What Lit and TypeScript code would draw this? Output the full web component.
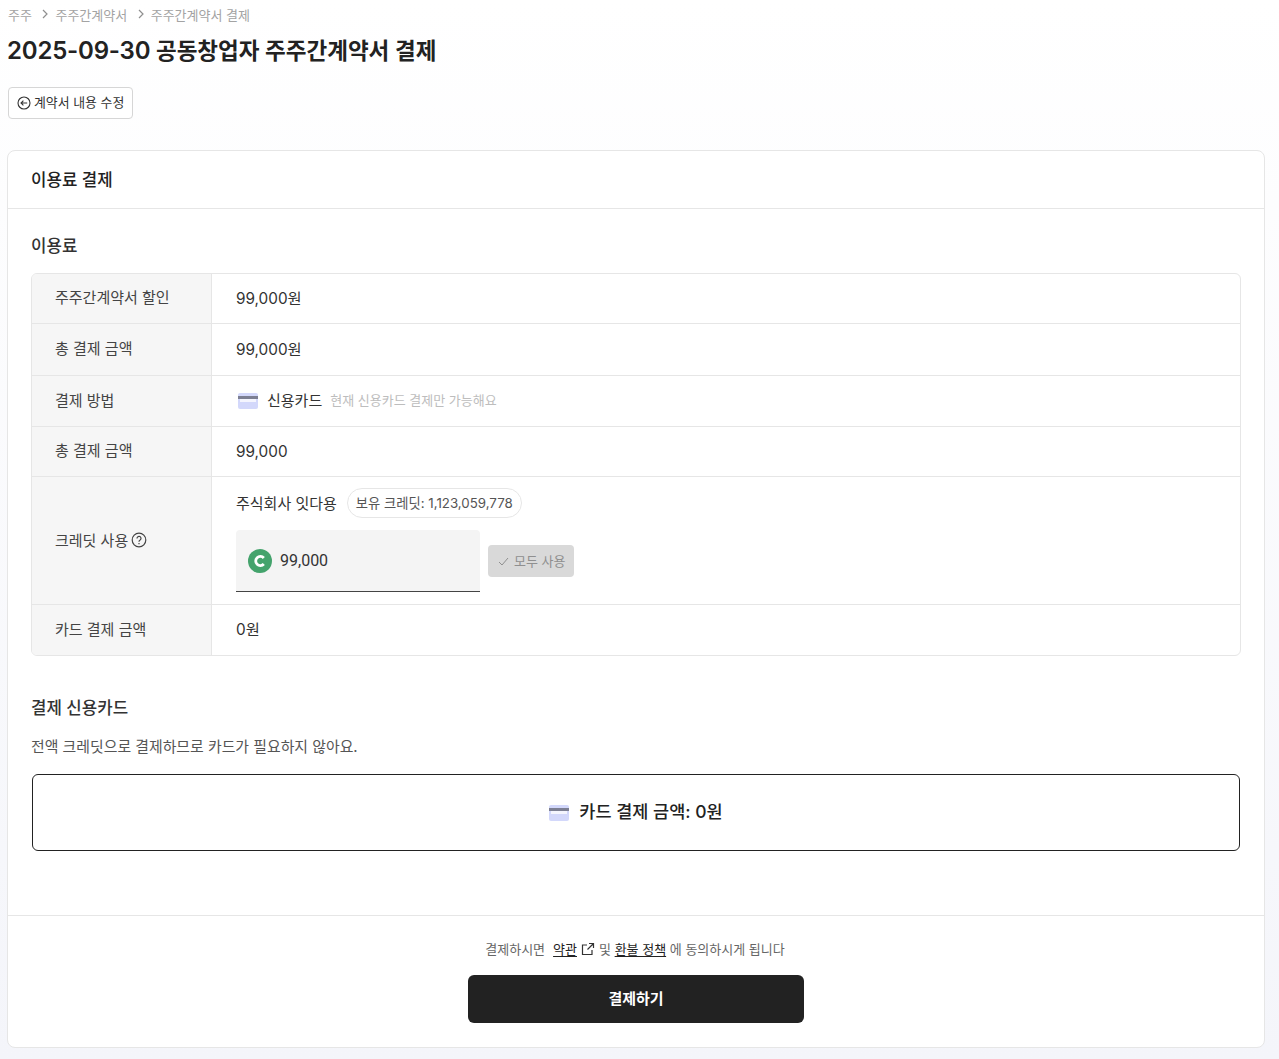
import { LitElement, css, html } from 'lit'
import { customElement } from 'lit/decorators.js'

const cardIcon = (cls: string) => html`
  <svg class=${cls} viewBox="0 0 20 16" aria-hidden="true">
    <rect x="0" y="0" width="20" height="16" rx="2" fill="#d3d8fb"></rect>
    <rect x="0" y="3" width="20" height="3" fill="#7c7f93"></rect>
    <rect x="2" y="6" width="16" height="3" fill="#f4f5fe"></rect>
  </svg>
`

@customElement('app-root')
export class AppRoot extends LitElement {
  static styles = css`
    :host {
      display: block;
      min-height: 1059px;
      box-sizing: border-box;
      padding: 0 14px 10px 7px;
      background: linear-gradient(#ffffff, #f4f5fa);
      color: #222;
      font-family: Inter, 'Noto Sans CJK KR', sans-serif;
      font-size: 16px;
    }
    .crumbs {
      display: flex;
      align-items: center;
      height: 30px;
      padding: 0 0 2px 1px;
      box-sizing: border-box;
      font-size: 13px;
      color: #a3a3a3;
    }
    .crumbs svg {
      width: 8px;
      height: 10px;
      margin: 0 6px 0 9.5px;
    }
    h1 {
      margin: 0;
      height: 42px;
      line-height: 42px;
      font-size: 22.5px;
      font-weight: 600;
      color: #222;
    }
    .date {
      font-size: 24px;
      letter-spacing: -0.2px;
    }
    .top {
      display: flex;
    }
    .back {
      display: inline-flex;
      align-items: center;
      box-sizing: border-box;
      height: 32px;
      margin: 15px 0 31px 1px;
      padding: 0 8px 3px 8px;
      gap: 3px;
      border: 1px solid #d6d6d6;
      border-radius: 4px;
      background: #fff;
      font-size: 12.9px;
      color: #333;
    }
    .back svg {
      width: 14px;
      height: 14px;
      margin-top: 3px;
    }
    .card {
      border: 1px solid #e6e6e6;
      border-radius: 8px;
      background: #fff;
    }
    .card-head {
      height: 58px;
      box-sizing: border-box;
      display: flex;
      align-items: center;
      padding: 0 0 1px 23px;
      border-bottom: 1px solid #e6e6e6;
      font-size: 16.8px;
      font-weight: 500;
    }
    .card-body {
      padding: 24px 23px 64px;
    }
    h2 {
      margin: 0;
      height: 24px;
      padding-top: 1px;
      box-sizing: border-box;
      line-height: 24px;
      font-size: 16.8px;
      font-weight: 500;
      color: #333;
    }
    .table {
      margin-top: 16px;
      border: 1px solid #e6e6e6;
      border-radius: 6px;
      overflow: hidden;
    }
    .row {
      display: grid;
      grid-template-columns: 180px 1fr;
      border-bottom: 1px solid #e6e6e6;
    }
    .row:last-child {
      border-bottom: 0;
    }
    .label {
      display: flex;
      align-items: center;
      gap: 3px;
      padding: 0 0 3px 23px;
      background: #f6f6f6;
      border-right: 1px solid #e6e6e6;
      font-size: 15px;
      font-weight: 400;
      color: #444;
    }
    .label.up {
      padding-bottom: 5px;
    }
    .label svg {
      width: 16px;
      height: 16px;
      margin-top: 2px;
    }
    .value {
      display: flex;
      align-items: center;
      padding: 0 0 1px 24px;
      font-size: 15.3px;
      color: #333;
    }
    .value.up {
      padding-bottom: 3px;
    }
    .value.up2 {
      padding-bottom: 5px;
    }
    .h49 { height: 49px; }
    .h51 { height: 51px; }
    .h50 { height: 50px; }
    .h127 { height: 127px; }
    .method-icon {
      width: 20px;
      height: 16px;
      margin: 0 9px 0 2px;
    }
    .method {
      padding-bottom: 2px;
      font-size: 15px;
      font-weight: 400;
    }
    .hint {
      margin-left: 8px;
      padding-bottom: 2px;
      font-size: 13px;
      color: #bdbdbd;
    }
    .credit {
      flex-direction: column;
      align-items: flex-start;
      justify-content: flex-start;
      padding-top: 11px;
      box-sizing: border-box;
    }
    .owner {
      display: flex;
      align-items: center;
      gap: 10px;
      height: 30px;
      font-size: 15px;
      font-weight: 400;
    }
    .owner-name {
      padding-bottom: 2px;
    }
    .pill {
      height: 30px;
      box-sizing: border-box;
      display: flex;
      align-items: center;
      padding: 0 8px 2px;
      border: 1px solid #e6e6e6;
      border-radius: 15px;
      font-size: 13.3px;
      font-weight: 400;
      color: #555;
    }
    .credit-input {
      display: flex;
      align-items: center;
      gap: 8px;
      margin-top: 12px;
    }
    .amount {
      display: flex;
      align-items: center;
      gap: 8px;
      box-sizing: border-box;
      width: 244px;
      height: 62px;
      padding-left: 12px;
      background: #f4f4f4;
      border-bottom: 1px solid #444;
      border-radius: 4px 4px 0 0;
      font-family: Roboto, sans-serif;
      font-size: 16px;
    }
    .coin {
      width: 24px;
      height: 24px;
    }
    .use-all {
      display: flex;
      align-items: center;
      gap: 4px;
      box-sizing: border-box;
      width: 86px;
      height: 32px;
      padding: 0 0 2px 9px;
      background: #d9d9d9;
      border-radius: 4px;
      font-size: 13px;
      color: #8f8f8f;
    }
    .use-all svg {
      width: 13px;
      height: 13px;
      margin-top: 2px;
    }
    .section {
      margin-top: 39px;
    }
    .note {
      margin: 17px 0 0;
      line-height: 22px;
      font-size: 14.9px;
      color: #555;
    }
    .summary {
      display: flex;
      align-items: center;
      justify-content: center;
      box-sizing: border-box;
      height: 77px;
      margin: 16px 1px 0;
      border: 1px solid #222;
      border-radius: 6px;
      font-size: 17.5px;
      font-weight: 500;
    }
    .summary span {
      padding-bottom: 5px;
    }
    .summary-icon {
      width: 20px;
      height: 16px;
      margin-right: 10px;
    }
    .foot {
      display: flex;
      flex-direction: column;
      align-items: center;
      height: 132px;
      box-sizing: border-box;
      padding-top: 23px;
      border-top: 1px solid #e6e6e6;
    }
    .agree {
      display: flex;
      align-items: center;
      height: 18px;
      padding: 0 2px 2px 0;
      font-size: 13px;
      color: #666;
    }
    .agree a {
      color: #222;
      font-weight: 400;
      text-decoration: underline;
      text-underline-offset: 2px;
    }
    .agree svg {
      width: 14px;
      height: 14px;
      margin: 2px 4px 0;
    }
    .terms {
      margin-left: 8px;
    }
    .pay {
      width: 336px;
      height: 48px;
      margin-top: 16px;
      padding: 0 0 3px;
      border: 0;
      border-radius: 6px;
      background: #222;
      color: #fff;
      font: 600 15px Inter, 'Noto Sans CJK KR', sans-serif;
    }
  `

  render() {
    return html`
      <nav class="crumbs">
        <span>주주</span>
        <svg viewBox="0 0 8 10"><path d="M2 1l4 4-4 4" fill="none" stroke="#8f8f8f" stroke-width="1.2"></path></svg>
        <span>주주간계약서</span>
        <svg viewBox="0 0 8 10"><path d="M2 1l4 4-4 4" fill="none" stroke="#8f8f8f" stroke-width="1.2"></path></svg>
        <span>주주간계약서 결제</span>
      </nav>
      <h1><span class="date">2025-09-30</span> 공동창업자 주주간계약서 결제</h1>
      <div class="top">
        <div class="back">
          <svg viewBox="0 0 14 14" fill="none" stroke="#333" stroke-width="1.1">
            <circle cx="7" cy="7" r="6"></circle>
            <path d="M10.2 7H4M6.4 4.6L4 7l2.4 2.4"></path>
          </svg>
          <span>계약서 내용 수정</span>
        </div>
      </div>

      <section class="card">
        <div class="card-head">이용료 결제</div>
        <div class="card-body">
          <h2>이용료</h2>
          <div class="table">
            <div class="row h49">
              <div class="label up">주주간계약서 할인</div>
              <div class="value up">99,000원</div>
            </div>
            <div class="row h51">
              <div class="label up">총 결제 금액</div>
              <div class="value up">99,000원</div>
            </div>
            <div class="row h50">
              <div class="label">결제 방법</div>
              <div class="value">
                ${cardIcon('method-icon')}
                <span class="method">신용카드</span>
                <span class="hint">현재 신용카드 결제만 가능해요</span>
              </div>
            </div>
            <div class="row h49">
              <div class="label up">총 결제 금액</div>
              <div class="value">99,000</div>
            </div>
            <div class="row h127">
              <div class="label">
                크레딧 사용
                <svg viewBox="0 0 16 16" fill="none" stroke="#444" stroke-width="1.2">
                  <circle cx="8" cy="8" r="6.8"></circle>
                  <path d="M6 6.4a2 2 0 1 1 3.1 1.6c-.8.5-1.1.9-1.1 1.7"></path>
                  <path d="M8 11v1.2"></path>
                </svg>
              </div>
              <div class="value credit">
                <div class="owner">
                  <span class="owner-name">주식회사 잇다용</span>
                  <span class="pill">보유 크레딧: 1,123,059,778</span>
                </div>
                <div class="credit-input">
                  <div class="amount">
                    <svg class="coin" viewBox="0 0 24 24">
                      <circle cx="12" cy="12" r="12" fill="#44a36c"></circle>
                      <path d="M15.8 9a4.6 4.6 0 1 0 0 6" fill="none" stroke="#fff" stroke-width="2.8"></path>
                    </svg>
                    <span>99,000</span>
                  </div>
                  <div class="use-all">
                    <svg viewBox="0 0 13 13"><path d="M2 7l3 3 6-7" fill="none" stroke="#8f8f8f" stroke-width="1"></path></svg>
                    <span>모두 사용</span>
                  </div>
                </div>
              </div>
            </div>
            <div class="row h50">
              <div class="label">카드 결제 금액</div>
              <div class="value up2">0원</div>
            </div>
          </div>

          <div class="section">
            <h2>결제 신용카드</h2>
            <p class="note">전액 크레딧으로 결제하므로 카드가 필요하지 않아요.</p>
            <div class="summary">
              ${cardIcon('summary-icon')}
              <span>카드 결제 금액: 0원</span>
            </div>
          </div>
        </div>
        <div class="foot">
          <div class="agree">
            <span>결제하시면</span>
            <a class="terms">약관</a>
            <svg viewBox="0 0 14 14" fill="none" stroke="#333" stroke-width="1.2">
              <path d="M6 3H1.5v9.5H11V8M8 1.5h4.5V6M12.5 1.5L6.5 7.5"></path>
            </svg>
            <span>및&nbsp;</span>
            <a>환불 정책</a>
            <span>&nbsp;에 동의하시게 됩니다</span>
          </div>
          <button class="pay">결제하기</button>
        </div>
      </section>
    `
  }
}
